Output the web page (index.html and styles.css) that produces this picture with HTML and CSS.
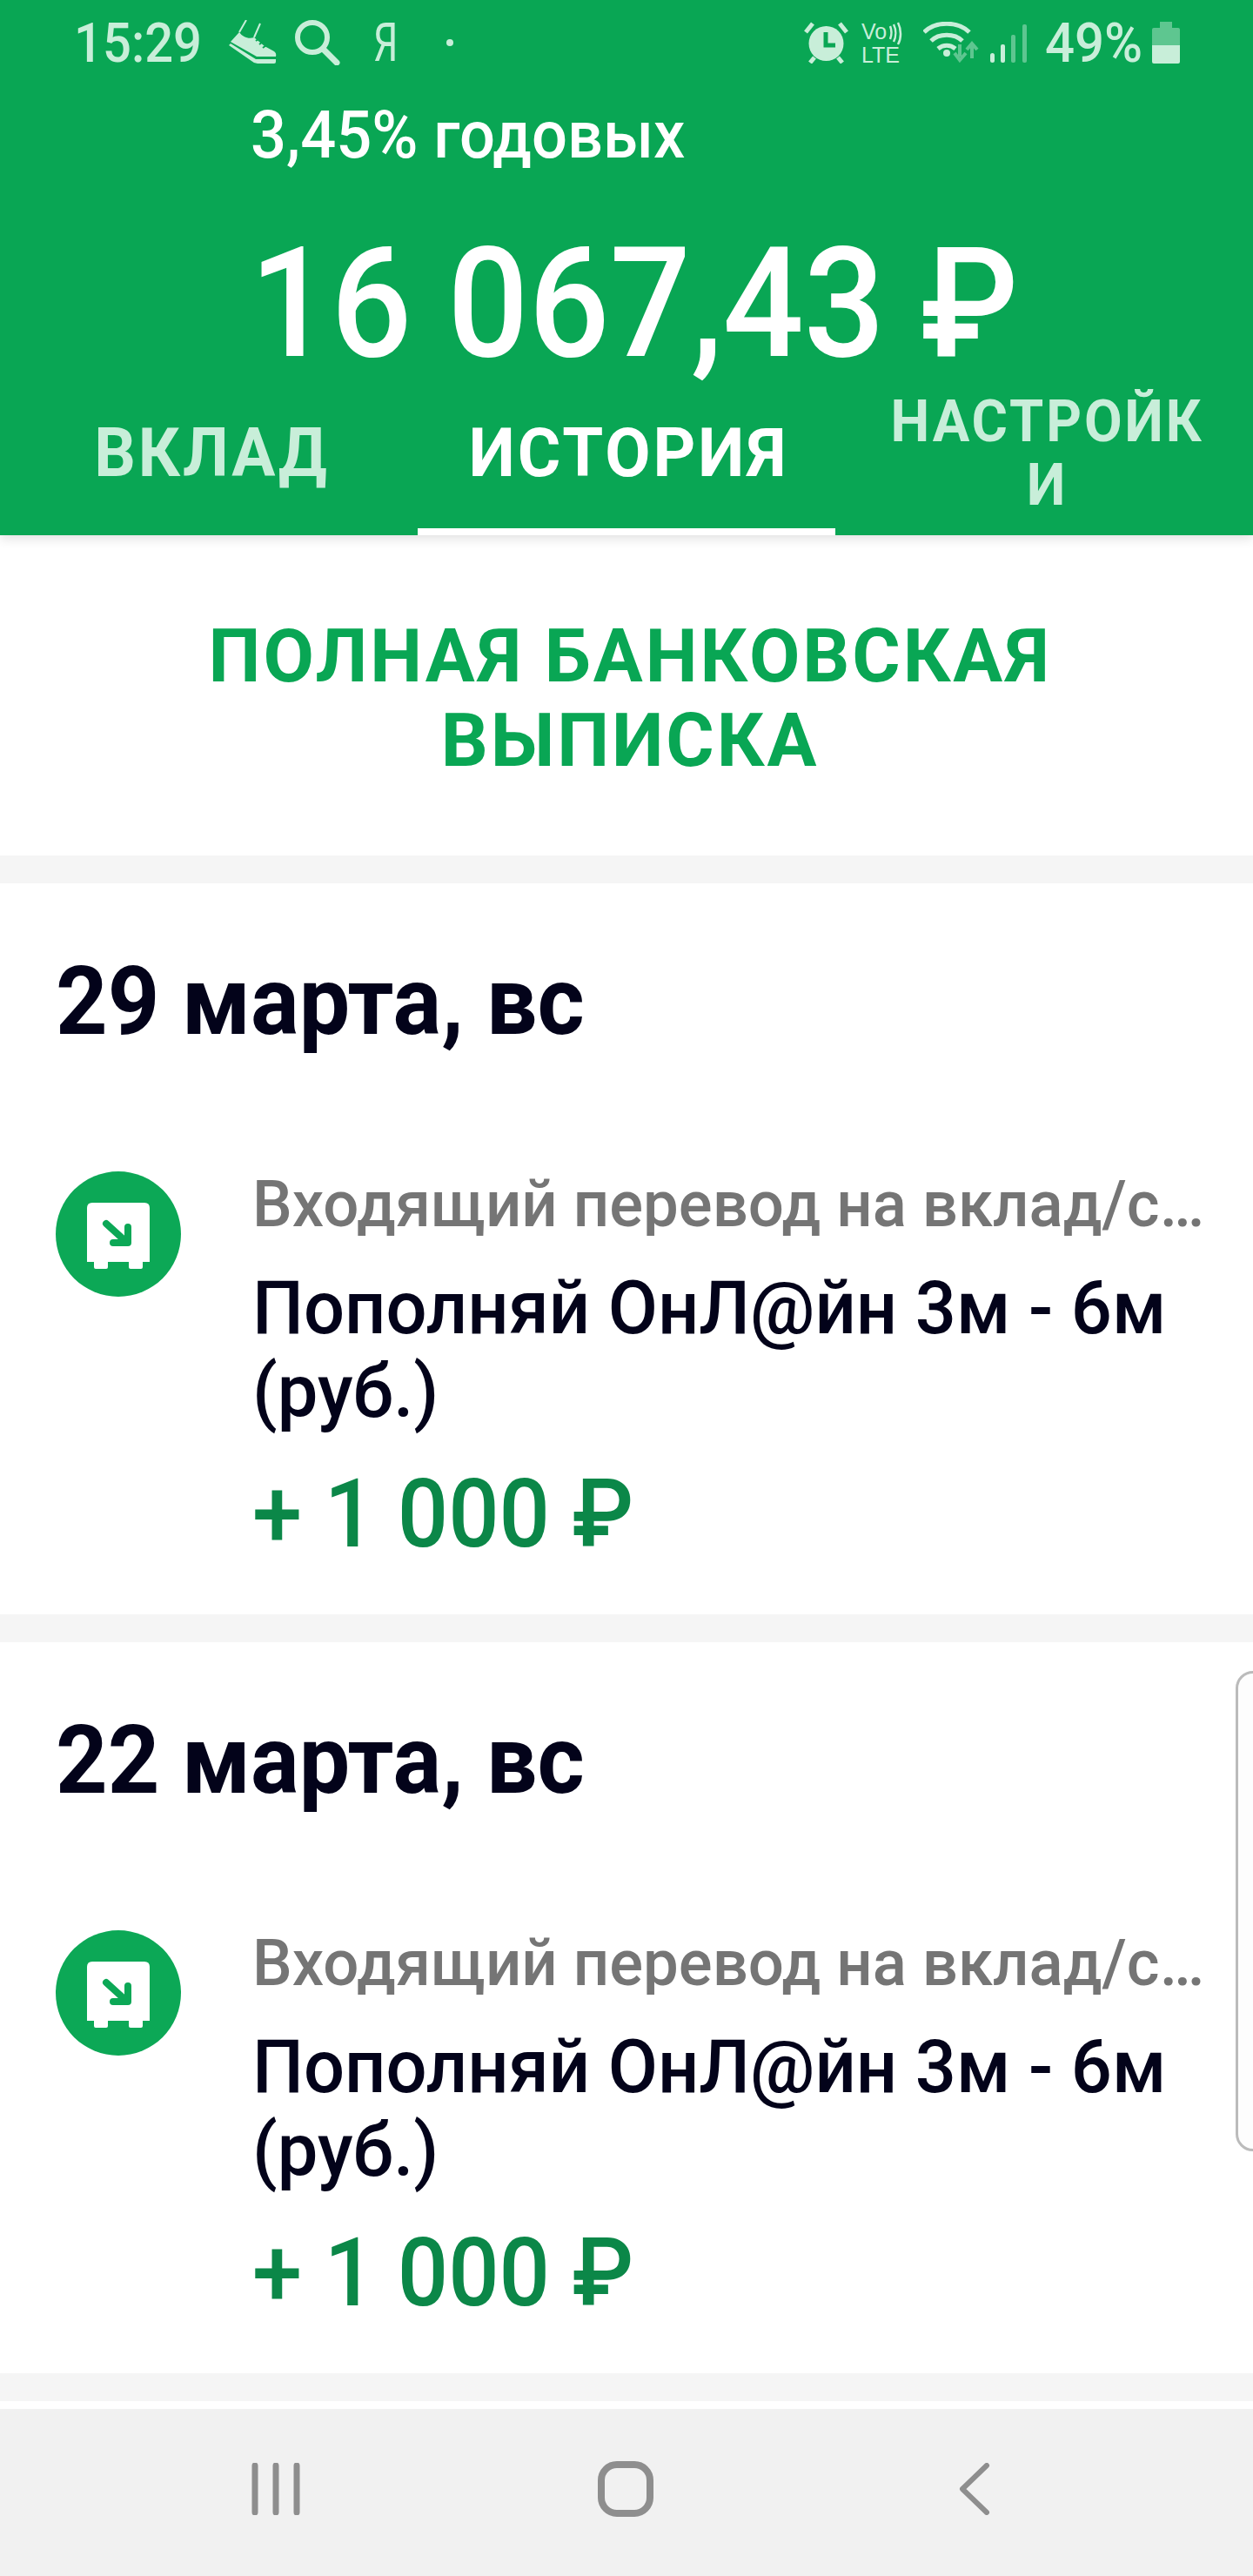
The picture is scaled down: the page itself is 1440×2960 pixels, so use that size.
FILE: index.html
```html
<!DOCTYPE html>
<html lang="ru">
<head>
<meta charset="utf-8">
<title>История вклада</title>
<link rel="stylesheet" href="styles.css">
</head>
<body>
<div class="screen">
  <header class="top">
    <div class="status">
      <div class="status-left">
        <span class="time">15:29</span>
        <svg class="i-shoe" viewBox="0 0 56 50"><path d="M21 0 13 14M37 4 30 20" fill="none" stroke="#c8eed9" stroke-width="2"/><path d="M13 14C17 20 24 22 30 20L42 30 53 36Q56 38 55 42H33L3 25z" fill="#c8eed9"/><path d="M1 29 3 27 32 45H55V48Q55 50 53 50H34Q30 50 27 47z" fill="#c8eed9"/><path d="M32 24l4-3M36 28l4-3M40 32l4-3" stroke="#09a654" stroke-width="2"/></svg>
        <svg class="i-search" viewBox="0 0 52 52"><circle cx="20" cy="20" r="17" fill="none" stroke="#c8eed9" stroke-width="6"/><path d="M33 34 48 49" stroke="#c8eed9" stroke-width="7" stroke-linecap="round"/></svg>
        <span class="ya">Я</span>
        <span class="dot"></span>
      </div>
      <div class="status-right">
        <svg class="i-alarm" viewBox="0 0 51 48"><circle cx="25.500" cy="25" r="20" fill="#c8eed9"/><path d="M25 12v15h11" fill="none" stroke="#09a654" stroke-width="5"/><path d="M2 12 10 2M49 12 41 2M7 47l5-6M44 47l-5-6" stroke="#c8eed9" stroke-width="5"/></svg>
        <svg class="i-volte" viewBox="0 0 48 48"><text x="0" y="20" class="volte-text">Vo</text><path d="M33 5c2 5 2 10 0 15M37 3c3 6 3 14 0 20M42 1c4 8 4 18 0 25" fill="none" stroke="#c8eed9" stroke-width="2.500"/><text x="0" y="47" class="volte-text">LTE</text></svg>
        <svg class="i-wifi" viewBox="0 0 64 47"><path d="M1 12C14-1 40-1 53 12M9 22c9-9 27-9 36 0M17 31c6-5 14-5 20 0" fill="none" stroke="#c8eed9" stroke-width="5"/><circle cx="27" cy="36" r="4" fill="#c8eed9"/><path d="M42 26v14M36 36l6 8 7-8M56 42V26M50 32l6-7 6 7" fill="none" stroke="#c8eed9" stroke-width="4" opacity=".45"/></svg>
        <svg class="i-signal" viewBox="0 0 42 44"><rect x="0" y="33" width="5" height="11" rx="2.500" fill="#c8eed9"/><rect x="12" y="23" width="5" height="21" rx="2" fill="#c8eed9"/><rect x="24" y="12" width="5" height="32" rx="2" fill="#c8eed9" opacity=".45"/><rect x="37" y="0" width="5" height="44" rx="2" fill="#c8eed9" opacity=".45"/></svg>
        <span class="pct">49%</span>
        <svg class="i-batt" viewBox="0 0 32 48"><path d="M9 0h14v7h7q2 0 2 2v19H0V9q0-2 2-2h7z" fill="#c8eed9" opacity=".45"/><path d="M0 27h32v19q0 2-2 2H2q-2 0-2-2z" fill="#c8eed9"/></svg>
      </div>
    </div>
    <div class="rate">3,45% годовых</div>
    <div class="amount">16 067,43 ₽</div>
    <nav class="tabs">
      <div class="tab tab-first"><span class="tab-label">ВКЛАД</span></div>
      <div class="tab tab-active"><span class="tab-label">ИСТОРИЯ</span></div>
      <div class="tab tab-small"><span class="tab-label">НАСТРОЙКИ</span></div>
    </nav>
  </header>

  <section class="statement"><span class="statement-label">ПОЛНАЯ БАНКОВСКАЯ ВЫПИСКА</span></section>

  <section class="card">
    <h2 class="date">29 марта, вс</h2>
    <div class="op">
      <svg class="op-icon" viewBox="0 0 144 144"><circle cx="72" cy="72" r="72" fill="#0ca856"/><path d="M42 36h60q6 0 6 6v62H36V42q0-6 6-6z" fill="#fff"/><path d="M44 100h16v10q0 2-2 2H46q-2 0-2-2zM84 100h16v10q0 2-2 2H86q-2 0-2-2z" fill="#fff"/><path d="M58 60l22 20M83 64v18H66" fill="none" stroke="#0ca856" stroke-width="8" stroke-linecap="round" stroke-linejoin="round"/></svg>
      <div class="op-body">
        <div class="op-type">Входящий перевод на вклад/счет</div>
        <div class="op-name">Пополняй ОнЛ@йн 3м - 6м (руб.)</div>
        <div class="op-sum">+ 1 000 ₽</div>
      </div>
    </div>
  </section>

  <section class="card">
    <h2 class="date">22 марта, вс</h2>
    <div class="op">
      <svg class="op-icon" viewBox="0 0 144 144"><circle cx="72" cy="72" r="72" fill="#0ca856"/><path d="M42 36h60q6 0 6 6v62H36V42q0-6 6-6z" fill="#fff"/><path d="M44 100h16v10q0 2-2 2H46q-2 0-2-2zM84 100h16v10q0 2-2 2H86q-2 0-2-2z" fill="#fff"/><path d="M58 60l22 20M83 64v18H66" fill="none" stroke="#0ca856" stroke-width="8" stroke-linecap="round" stroke-linejoin="round"/></svg>
      <div class="op-body">
        <div class="op-type">Входящий перевод на вклад/счет</div>
        <div class="op-name">Пополняй ОнЛ@йн 3м - 6м (руб.)</div>
        <div class="op-sum">+ 1 000 ₽</div>
      </div>
    </div>
  </section>

  <div class="sliver"></div>

  <footer class="navbar">
    <svg class="nav-recent" viewBox="0 0 56 60"><path d="M4 3v54M28 3v54M52 3v54" fill="none" stroke="#8e8e8e" stroke-width="7" stroke-linecap="round"/></svg>
    <svg class="nav-home" viewBox="0 0 64 64"><rect x="4" y="4" width="56" height="56" rx="18" fill="none" stroke="#8e8e8e" stroke-width="8"/></svg>
    <svg class="nav-back" viewBox="0 0 38 60"><path d="M33 3 5 30l28 27" fill="none" stroke="#8e8e8e" stroke-width="6" stroke-linecap="round" stroke-linejoin="round"/></svg>
  </footer>

  <div class="handle"></div>
</div>
</body>
</html>
```
FILE: styles.css
```css
* { box-sizing: border-box; }
html, body { margin: 0; padding: 0; }
body { background: #f5f5f5; font-family: Roboto, "Noto Sans", sans-serif; }
.screen { position: relative; width: 1440px; height: 2960px; overflow: hidden; display: flex; flex-direction: column; }

.top { height: 615px; background: #09a654; color: #fff; box-shadow: 0 4px 12px rgba(0,0,0,.12); position: relative; z-index: 1; flex: none; }

.status { height: 100px; padding: 0 84px 0 85px; display: flex; justify-content: space-between; align-items: flex-start; color: #c8eed9; }
.status-left, .status-right { display: flex; align-items: flex-start; height: 100px; }
.time { font-size: 63px; font-weight: 500; line-height: 100px; width: 148px; white-space: nowrap; transform: scaleX(.92); transform-origin: left; }
.i-shoe { width: 56px; height: 50px; margin: 23px 0 0 29px; }
.i-search { width: 52px; height: 52px; margin: 23px 0 0 21px; }
.ya { font-size: 62px; line-height: 98px; margin-left: 38px; width: 25px; transform: scaleX(.72); transform-origin: left; }
.dot { width: 8px; height: 8px; border-radius: 50%; background: #c8eed9; margin: 45px 0 0 59px; }
.i-alarm { width: 51px; height: 48px; margin-top: 25px; }
.i-volte { width: 48px; height: 48px; margin: 25px 0 0 15px; overflow: visible; }
.volte-text { font-family: "Liberation Sans", sans-serif; font-size: 25px; fill: #c8eed9; }
.i-wifi { width: 64px; height: 47px; margin: 25px 0 0 23px; }
.i-signal { width: 42px; height: 44px; margin: 28px 0 0 13px; }
.pct { font-size: 63px; font-weight: 500; line-height: 100px; margin-left: 21px; width: 110px; white-space: nowrap; transform: scaleX(.95); transform-origin: left; }
.i-batt { width: 32px; height: 48px; margin: 25px 0 0 13px; }

.rate { height: 88px; margin-left: 288px; font-size: 76px; font-weight: 500; line-height: 110px; white-space: nowrap; transform: scaleX(.95); transform-origin: left; }
.amount { height: 190px; margin-left: 287px; font-size: 176px; font-weight: 500; line-height: 322px; white-space: nowrap; transform: scaleX(.932); transform-origin: left; }

.tabs { height: 237px; display: grid; grid-template-columns: repeat(3, 480px); }
.tab { height: 237px; display: flex; align-items: flex-end; justify-content: center; padding-bottom: 57px; text-align: center; font-size: 77px; font-weight: 700; letter-spacing: 3px; line-height: 73px; color: #c8eed9; }
.tab-label { transform: scaleX(.97); }
.tab-first { padding-left: 6px; }
.tab-active { color: #fff; border-bottom: 8px solid #fff; padding: 0 0 49px 5px; }
.tab-active .tab-label { transform: scaleX(.985); }
.tab-small { font-size: 66px; padding: 0 0 21px 6px; }
.tab-small .tab-label { flex: none; width: 385px; word-break: break-all; transform: scaleX(.96); }

.statement { flex: none; height: 368px; background: #fff; display: flex; align-items: center; justify-content: center; text-align: center; padding: 6px 200px 0 208px; font-size: 86px; font-weight: 700; letter-spacing: 3px; line-height: 97px; color: #09a654; }
.statement-label { transform: scaleX(.985); }

.card { flex: none; height: 840px; margin-top: 32px; background: #fff; padding: 0 0 0 64px; }
.date { margin: 0; height: 331px; padding-top: 90px; font-size: 110px; font-weight: 700; line-height: 92px; color: #03031a; white-space: nowrap; transform: scaleX(.945); transform-origin: left; }
.op { display: flex; gap: 82px; }
.op-icon { flex: none; width: 144px; height: 144px; }
.op-body { min-width: 0; flex: 1; }
.op-type { width: 1135px; font-size: 75px; font-weight: 500; line-height: 74px; color: #757575; white-space: nowrap; overflow: hidden; text-overflow: ellipsis; transform: scaleX(.967); transform-origin: left; }
.op-name { width: 1135px; margin-top: 35px; font-size: 86px; font-weight: 500; line-height: 96px; color: #03031a; transform: scaleX(.965); transform-origin: left; }
.op-sum { margin-top: 33px; font-size: 110px; font-weight: 500; line-height: 120px; color: #0b8748; white-space: nowrap; transform: scaleX(.935); transform-origin: left; }

.sliver { flex: none; height: 9px; margin-top: 32px; background: #fff; }
.navbar { flex: 1; background: #f1f1f1; display: flex; align-items: center; justify-content: space-between; padding: 0 301px 8px 289px; }
.nav-recent { width: 56px; height: 60px; }
.nav-home { width: 64px; height: 64px; margin-right: 8px; }
.nav-back { width: 38px; height: 60px; }

.handle { position: absolute; left: 1420px; top: 1920px; width: 40px; height: 552px; border: 3px solid #bbb; border-radius: 20px; background: #fdfdfd; }
```
